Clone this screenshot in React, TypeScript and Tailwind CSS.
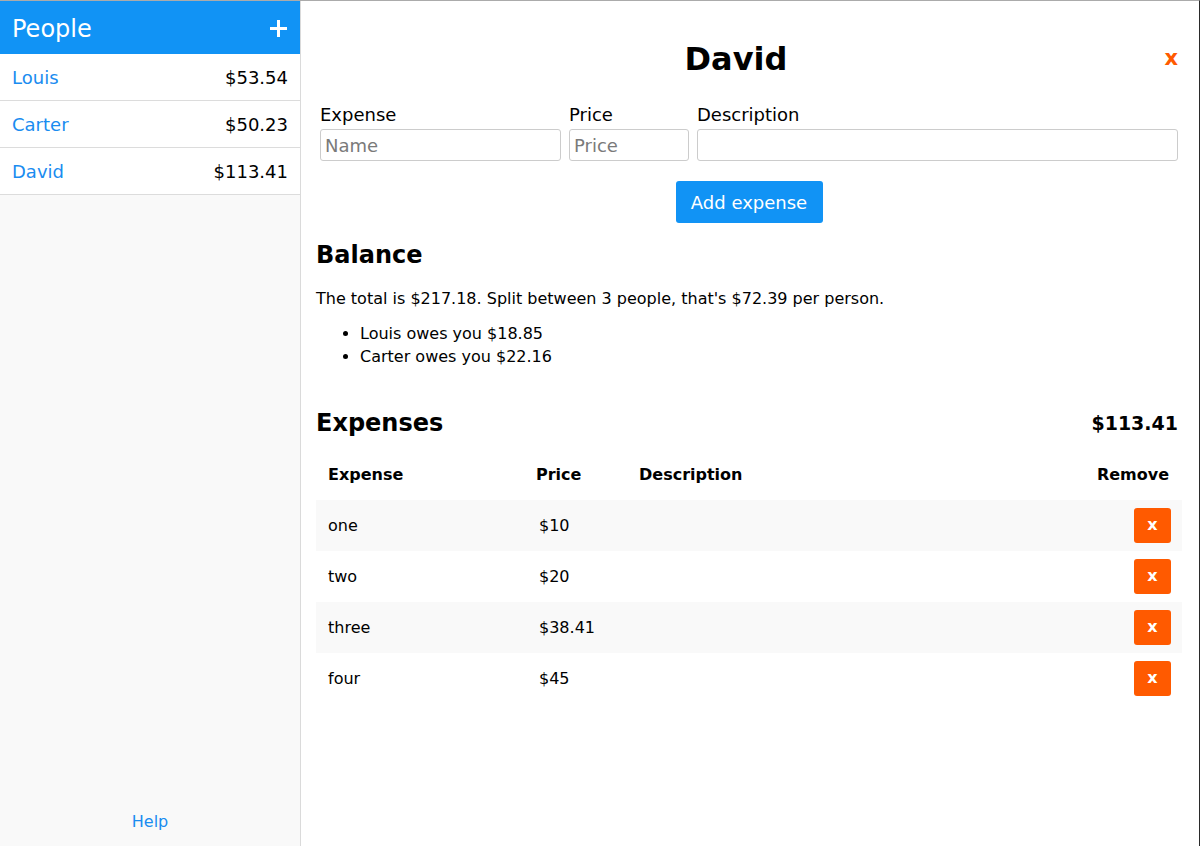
import React from "react";

const font = { fontFamily: '"DejaVu Sans", Verdana, sans-serif' };

const people = [
  { name: "Louis", amount: "$53.54" },
  { name: "Carter", amount: "$50.23" },
  { name: "David", amount: "$113.41" },
];

const expenses = [
  { name: "one", price: "$10" },
  { name: "two", price: "$20" },
  { name: "three", price: "$38.41" },
  { name: "four", price: "$45" },
];

export default function App() {
  return (
    <div
      style={font}
      className="w-[1200px] h-[846px] flex border-t border-t-[#ababab] border-r border-r-[#2a2a2a] overflow-hidden bg-white text-black"
    >
      <aside className="w-[301px] shrink-0 flex flex-col bg-[#f9f9f9] border-r border-r-[#dadada]">
        <div className="h-[53px] bg-[#1193f5] flex items-center justify-between pl-[12px] pr-[13px]">
          <span className="text-white text-[24px] mt-[2px]">People</span>
          <svg width="17" height="17" viewBox="0 0 17 17" className="mt-[2px]">
            <path d="M8.5 0 V17 M0 8.5 H17" stroke="white" strokeWidth="3" />
          </svg>
        </div>
        {people.map((p) => (
          <div
            key={p.name}
            className="h-[47px] bg-white border-b border-b-[#dcdcdc] flex items-center justify-between pl-[12px] pr-[12px] pt-[1px] text-[18px]"
          >
            <span className="text-[#1a8cf0]">{p.name}</span>
            <span>{p.amount}</span>
          </div>
        ))}
        <div className="flex-1" />
        <div className="h-[32px] flex items-start justify-center">
          <span className="text-[#1a8cf0] text-[16px] leading-none">Help</span>
        </div>
      </aside>

      <main className="flex-1 pl-[15px] pr-[17px] pt-[24px]">
        <div className="relative flex justify-center h-[80px] pt-[18px] pr-[26px]">
          <h1 className="text-[32px] font-bold leading-none">David</h1>
          <span className="absolute right-[4px] top-[23px] text-[#ff5a00] text-[21px] font-bold leading-none">
            x
          </span>
        </div>
        <div className="flex gap-[8px] pl-[4px] pr-[4px]">
          <div className="w-[241px] flex flex-col">
            <label className="text-[18px] leading-[20px]">Expense</label>
            <input
              placeholder="Name"
              className="mt-[4px] h-[32px] border border-[#cccccc] rounded-[3px] px-[4px] text-[18px] placeholder:text-[#7a7a7a] outline-none"
              style={font}
            />
          </div>
          <div className="w-[120px] flex flex-col">
            <label className="text-[18px] leading-[20px]">Price</label>
            <input
              placeholder="Price"
              className="mt-[4px] h-[32px] border border-[#cccccc] rounded-[3px] px-[4px] text-[18px] placeholder:text-[#7a7a7a] outline-none"
              style={font}
            />
          </div>
          <div className="flex-1 flex flex-col">
            <label className="text-[18px] leading-[20px]">Description</label>
            <input
              className="mt-[4px] h-[32px] border border-[#cccccc] rounded-[3px] px-[4px] text-[18px] outline-none"
              style={font}
            />
          </div>
        </div>
        <div className="flex justify-center mt-[20px]">
          <button
            className="w-[147px] h-[42px] bg-[#1193f5] text-white rounded-[3px] text-[18px]"
            style={font}
          >
            Add expense
          </button>
        </div>

        <h2 className="mt-[18px] text-[24px] font-bold leading-[28px]">Balance</h2>
        <p className="mt-[21px] text-[16px] leading-[18px]">
          The total is $217.18. Split between 3 people, that's $72.39 per person.
        </p>
        <ul className="mt-[14px] list-disc pl-[44px] text-[16px] leading-[23px]">
          <li>Louis owes you $18.85</li>
          <li>Carter owes you $22.16</li>
        </ul>

        <div className="mt-[41px] flex items-center justify-between pr-[4px]">
          <h2 className="text-[24px] font-bold leading-[28px]">Expenses</h2>
          <span className="text-[19px] font-bold">$113.41</span>
        </div>

        <table className="mt-[13px] w-[866px] border-collapse text-[16px]">
          <thead>
            <tr className="h-[49px]">
              <th className="text-left font-bold pl-[12px] w-[220px]">Expense</th>
              <th className="text-left font-bold w-[103px]">Price</th>
              <th className="text-left font-bold">Description</th>
              <th className="text-right font-bold pr-[13px]">Remove</th>
            </tr>
          </thead>
          <tbody>
            {expenses.map((e, i) => (
              <tr key={e.name} className={`h-[51px] ${i % 2 === 0 ? "bg-[#f9f9f9]" : "bg-white"}`}>
                <td className="pl-[12px] pt-[1px]">{e.name}</td>
                <td className="pl-[3px] pt-[1px]">{e.price}</td>
                <td></td>
                <td className="text-right pr-[11px]">
                  <button
                    className="w-[37px] h-[35px] bg-[#ff5a00] text-white rounded-[3px] font-bold text-[16px] align-middle"
                    style={font}
                  >
                    x
                  </button>
                </td>
              </tr>
            ))}
          </tbody>
        </table>
      </main>
    </div>
  );
}
